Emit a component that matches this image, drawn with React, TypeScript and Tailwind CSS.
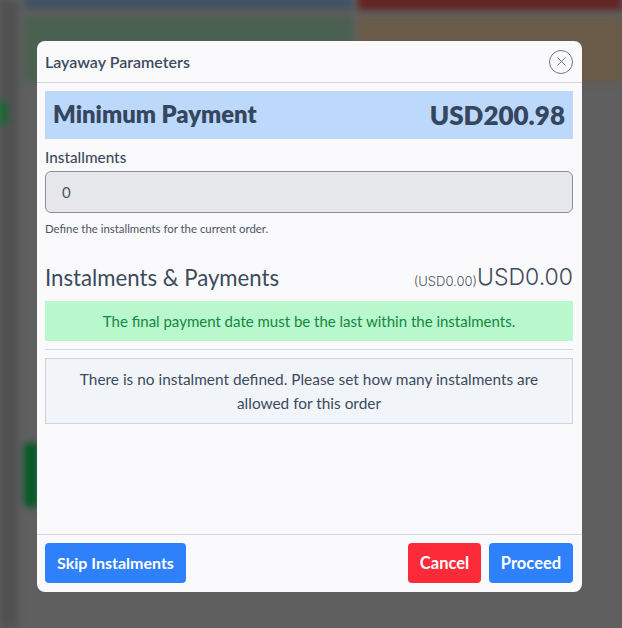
import { X } from "lucide-react";

export default function App() {
  return (
    <div className="relative h-[628px] w-[622px] overflow-hidden bg-[#5f5f5f] font-['Lato','Liberation_Sans',sans-serif]">
      {/* Blurred page behind the dialog */}
      <div className="flex h-full blur-[3px]">
        <div className="flex w-[18px] shrink-0 flex-col bg-[#515151] pt-[100px]">
          <div className="h-[26px] w-[7px] rounded-r-full bg-[#0a6a2e]" />
        </div>
        <div className="flex min-w-0 flex-1 flex-col pl-[6px]">
          <div className="-mt-[8px] flex h-[18px] gap-[5px]">
            <div className="w-[329px] bg-[#445364]" />
            <div className="flex-1 bg-[#642424]" />
          </div>
          <div className="mt-[7px] flex h-[65px] gap-[5px]">
            <div className="w-[329px] bg-[#4a6050]" />
            <div className="flex-1 bg-[#6a5a48]" />
          </div>
          <div className="mt-[361px] h-[64px] w-[14px] rounded-l bg-[#065a28]" />
        </div>
      </div>

      {/* Dialog */}
      <div className="absolute inset-0 flex items-start pl-[37px] pt-[41px]">
        <div className="flex h-[550.5px] w-[545px] flex-col rounded-[8px] bg-[#fafafc] text-[#3d4a5c]">
          <div className="flex h-[42px] items-center justify-between border-b border-[#d3d6dc] pl-[8px] pr-[9px]">
            <h2 className="text-[16px] font-semibold">Layaway Parameters</h2>
            <button className="flex h-[24px] w-[24px] items-center justify-center rounded-full border border-[#6f7782] text-[#4b5563]">
              <X size={15} strokeWidth={1.25} />
            </button>
          </div>

          <div className="flex flex-1 flex-col pl-[8px] pr-[9px] pt-[8px]">
            <div className="flex h-[48px] items-center justify-between bg-[#bcd9fc] px-[8px] font-extrabold text-[#36465e]">
              <span className="text-[23.8px]">Minimum Payment</span>
              <span className="text-[26px]">USD200.98</span>
            </div>

            <label className="mt-[8px] text-[15.3px] font-medium leading-[20px]">Installments</label>
            <div className="mt-[4px] flex h-[42px] items-center rounded-[6px] border border-[#8a919c] bg-[#e5e7eb] pl-[16px] text-[15px] text-[#4b5563]">
              0
            </div>
            <p className="mt-[8px] text-[11.4px] leading-[16px] text-[#4b5563]">Define the installments for the current order.</p>

            <div className="mt-[29px] flex items-end justify-between leading-none">
              <h3 className="text-[22.2px] font-normal">Instalments &amp; Payments</h3>
              <div className="flex items-end font-['Inter',sans-serif] text-[23px] font-light">
                <span className="mb-[1px] text-[13px] text-[#4b5563]">(USD0.00)</span>
                <span>USD0.00</span>
              </div>
            </div>

            <div className="mt-[12px] flex h-[40px] items-center justify-center bg-[#b9f7cd] text-[15px] text-[#13883f]">
              The final payment date must be the last within the instalments.
            </div>

            <div className="mt-[8px] border-t border-[#d8d8dc] pt-[8px]">
              <div className="border border-[#ced3da] bg-[#f1f5f9] px-[16px] py-[8px] text-center text-[15.4px] leading-[24px]">
                There is no instalment defined. Please set how many instalments are allowed for this order
              </div>
            </div>
          </div>

          <div className="flex h-[57.5px] items-center justify-between border-t border-[#d3d6dc] pl-[8px] pr-[9px]">
            <button className="h-[40px] w-[141px] rounded-[4px] bg-[#2f80fb] text-[16px] font-bold text-white">Skip Instalments</button>
            <div className="flex gap-[8px]">
              <button className="h-[40px] w-[73px] rounded-[4px] bg-[#fd2a3a] text-[16.5px] font-bold text-white">Cancel</button>
              <button className="h-[40px] w-[84px] rounded-[4px] bg-[#2f80fb] text-[16.5px] font-bold text-white">Proceed</button>
            </div>
          </div>
        </div>
      </div>
    </div>
  );
}
